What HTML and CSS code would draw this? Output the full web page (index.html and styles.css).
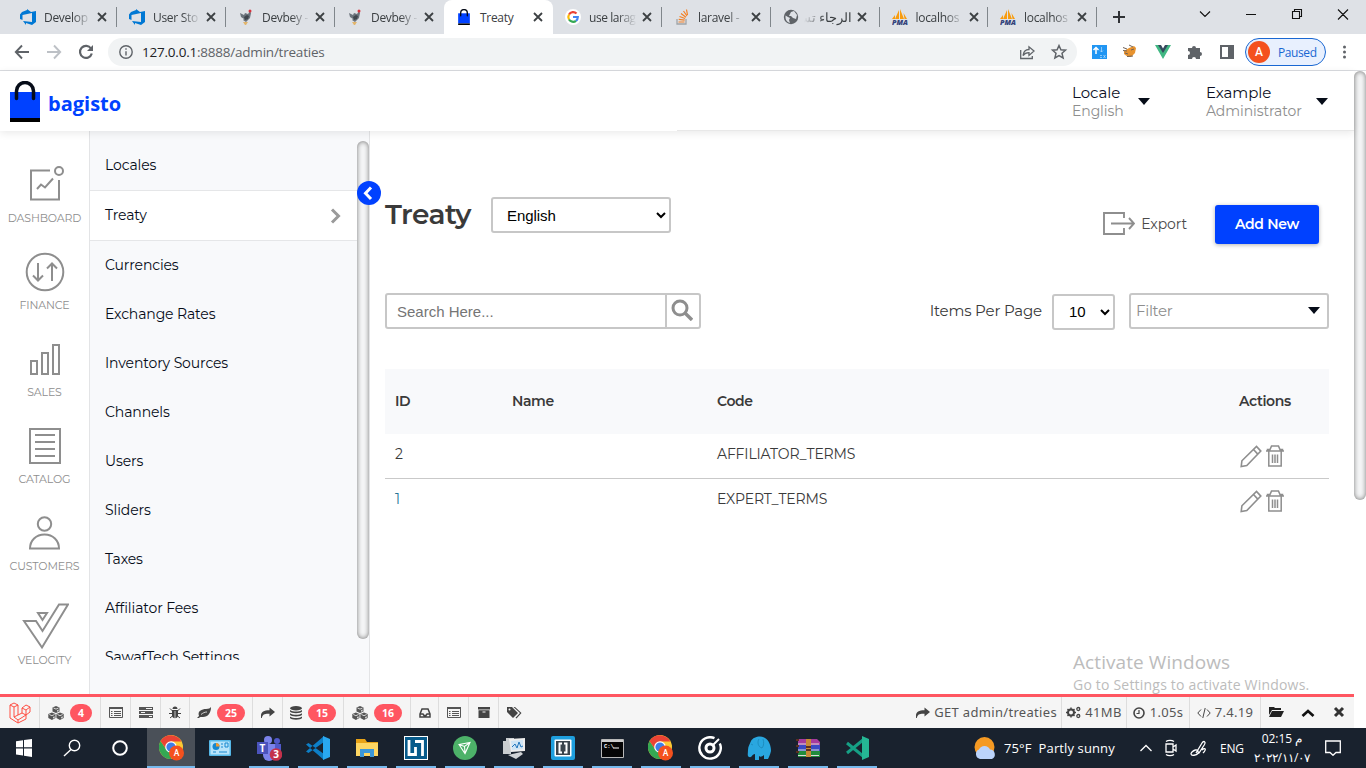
FILE: index.html
```html
<!DOCTYPE html>
<html lang="en">
<head>
<meta charset="utf-8">
<title>Treaty</title>
<link rel="stylesheet" href="styles.css">
</head>
<body>
<svg class="defs" aria-hidden="true">
  <symbol id="devops" viewBox="0 0 16 16"><path fill="#0078d4" d="M0 5.500 2 3 7 1V0l4 3 5-1v11l-4 3-6-2v2L3 12l9 1V4L2.500 6v5L0 10z"/></symbol>
  <symbol id="devbey" viewBox="0 0 16 16"><path fill="#6b737c" d="M2 4l4 2 1-2 3 1 2-3 1 2-1 5-4 4-3-2 1-1-3-2z"/><path fill="#3f464e" d="M6 8l3-2 2 1-1 3-3 1z"/><circle cx="12" cy="2" r="1.500" fill="#d8323c"/><path fill="#e2b56c" d="M5 13h5l-2 3H7z"/></symbol>
  <symbol id="bag" viewBox="0 0 30 41"><path fill="#0041ff" d="M0 11h30v26H0z"/><path d="M0 37h30v4H0z"/><path d="M6.500 17.500V10a8.500 8.500 0 0 1 17 0v7.500" fill="none" stroke="#060c18" stroke-width="3.500" stroke-linecap="round"/></symbol>
  <symbol id="pma" viewBox="0 0 16 16"><path fill="#f89c0e" d="M3 10 7 1v9zM8 10V0l4 10zM12.500 10l-1-6 3.500 6zM0 10l3-4v4z"/><text x="0" y="15.500" font-family="Open Sans" font-size="6.500" font-weight="800" font-style="italic" fill="#33417a" textLength="16" lengthAdjust="spacingAndGlyphs">PMA</text></symbol>
  <symbol id="x" viewBox="0 0 10 10"><path d="M1 1l8 8M9 1l-8 8" stroke="#3c4043" stroke-width="1.800"/></symbol>
  <symbol id="chrome" viewBox="0 0 26 26"><circle cx="12" cy="12" r="12" fill="#fcc934"/><path fill="#34a853" d="M1.600 6A12 12 0 0 0 12 24l5-9-10-1z"/><path fill="#ea4335" d="M1.600 6A12 12 0 0 1 22.400 6.500H12L7 14z"/><circle cx="12" cy="12" r="5.800" fill="#fff"/><circle cx="12" cy="12" r="4.600" fill="#3f7de8"/><circle cx="17.500" cy="18" r="7.500" fill="#f4511e"/><text x="17.500" y="21" text-anchor="middle" font-family="Roboto" font-size="8.500" font-weight="500" fill="#fff">A</text></symbol>
  <symbol id="cubes" viewBox="0 0 16 14"><path fill="#555" d="M8 0l3.500 1.500v4L8 7 4.500 5.500v-4zM3.900 6.500 7.500 8v4L3.900 14 .3 12V8zM12 6.500 15.700 8v4L12 14l-3.600-2V8z"/><path d="M5.500 2 8 3.100 10.500 2M1.300 8.500l2.600 1.200 2.600-1.200M9.500 8.500l2.500 1.200 2.600-1.200" fill="none" stroke="#f5f5f5" stroke-width=".8"/><path d="M9.200 4.200v1.600l1.300-.6V3.600zM5.200 11v1.600l1.300-.7v-1.600zM13.300 11v1.600l1.300-.7v-1.600z" fill="#f5f5f5"/></symbol>
  <symbol id="list" viewBox="0 0 14 12"><path fill="none" stroke="#555" d="M.5.5h13v10H.5z"/><path stroke="#555" d="M0 1h14" stroke-width="2"/><path stroke="#555" d="M2 4.500h1.500M5 4.500h7M2 6.500h1.500M5 6.500h7M2 8.500h1.500M5 8.500h7"/></symbol>
  <symbol id="share" viewBox="0 0 14 12"><path fill="#444" d="M0 11V8.500C0 5 3 3.300 8.500 3.300V.5L14 5 8.500 9.500V6.700C4 6.500 1.500 7 .8 11z"/></symbol>
  <symbol id="pencil" viewBox="0 0 22 23"><path d="M1.200 21.500l.7-5.700L16.500 1.500l4.300 4.600L6.800 20.500zM13.500 4.500l4.300 4.600" fill="none" stroke="#8e8e8e" stroke-width="1.600"/></symbol>
  <symbol id="trash" viewBox="0 0 18 22"><path d="M0 6h18M2.800 6v15h12.400V6M1.500 6V4.500H4l1.500-3.400h7L14 4.500h2.500V6M6.500 9.500V18M9 9.500V18M11.500 9.500V18" fill="none" stroke="#8e8e8e" stroke-width="1.500"/></symbol>
  <symbol id="down" viewBox="0 0 12 7"><path fill="#060c18" d="M0 0h12L6 7z"/></symbol>
</svg>

<div class="tabs">
  <div class="tab"><svg class="fav"><use href="#devops"/></svg><span class="name">Develop</span><svg class="close"><use href="#x"/></svg></div>
  <div class="tab"><svg class="fav"><use href="#devops"/></svg><span class="name">User Sto</span><svg class="close"><use href="#x"/></svg></div>
  <div class="tab"><svg class="fav"><use href="#devbey"/></svg><span class="name">Devbey -</span><svg class="close"><use href="#x"/></svg></div>
  <div class="tab plain"><svg class="fav"><use href="#devbey"/></svg><span class="name">Devbey -</span><svg class="close"><use href="#x"/></svg></div>
  <div class="tab active"><svg class="fav"><use href="#bag"/></svg><span class="name">Treaty</span><svg class="close"><use href="#x"/></svg></div>
  <div class="tab"><svg class="fav" viewBox="0 0 16 16"><circle cx="8" cy="8" r="8" fill="#fff"/><g fill="none" stroke-width="2.200"><path stroke="#ea4335" d="M4 5.500a4.800 4.800 0 0 1 7.500-1"/><path stroke="#fbbc05" d="M4 5.500a5 5 0 0 0 0 5"/><path stroke="#34a853" d="M4 10.500a4.800 4.800 0 0 0 7 1.300"/><path stroke="#4285f4" d="M11 11.800A5 5 0 0 0 12.800 8H8"/></g></svg><span class="name tight">use larag</span><svg class="close"><use href="#x"/></svg></div>
  <div class="tab"><svg class="fav" viewBox="0 0 16 16"><path d="M3 10v5h9v-5" fill="none" stroke="#a0a4a8" stroke-width="1.300"/><path d="M4.500 13h6M4.700 10.300l6 .9M5.500 7.500l5.600 2M7 4.500l5 3.700M9.500 2l3.500 5M12.500.5l1 5.500" stroke="#f48024" stroke-width="1.200"/></svg><span class="name">laravel -</span><svg class="close"><use href="#x"/></svg></div>
  <div class="tab"><svg class="fav" viewBox="0 0 16 16"><circle cx="8" cy="8" r="7.200" fill="#5f6368"/><path fill="#dee1e6" d="M2.500 6.500 5 8l2 1-1 2 1 3a6 6 0 0 1-4.500-5zM8 3l3-1 3 4-1 4-3-1-2-2H6l1-2z"/></svg><span class="name rtl" dir="rtl">الرجاء تسـ</span><svg class="close"><use href="#x"/></svg></div>
  <div class="tab"><svg class="fav"><use href="#pma"/></svg><span class="name">localhos</span><svg class="close"><use href="#x"/></svg></div>
  <div class="tab"><svg class="fav"><use href="#pma"/></svg><span class="name">localhos</span><svg class="close"><use href="#x"/></svg></div>
  <svg class="win" viewBox="1097 0 269 34" fill="none"><path d="M1113 17h12M1119 11v12" stroke="#303236" stroke-width="2"/><g stroke="#111" stroke-width="1.100"><path d="M1200 11.500l5 5 5-5M1246 14.500h10M1292.500 11.500h7v7h-7zM1294.500 11.500v-2h7v7h-2M1338 9.500l10 10M1348 9.500l-10 10"/></g></svg>
</div>

<div class="toolbar">
  <svg class="navbtns" viewBox="0 34 108 36" fill="none" stroke-width="1.900"><path stroke="#5f6368" d="M29 52H16M22 45.500 15.800 52l6.200 6.500"/><path stroke="#bdc1c6" d="M47 52h13M54 45.500l6.200 6.500-6.200 6.500"/><path stroke="#5f6368" stroke-width="2.200" d="M91 48.500a6 6 0 1 0 .8 5"/><path fill="#5f6368" d="M93 45v6h-6z"/></svg>
  <div class="url">
    <svg class="info" viewBox="0 0 14 14" fill="none" stroke="#5f6368" stroke-width="1.400"><circle cx="7" cy="7" r="6.200"/><path d="M7 6.200v4.300M7 3.300v1.500"/></svg>
    <span class="addr"><b>127.0.0.1</b>:8888/admin/treaties</span>
    <svg class="urlicons" viewBox="1018 38 52 28" fill="none" stroke="#5f6368" stroke-width="1.300"><path d="M1020.700 50v8.500h11.600V56M1023 55.500c.5-4 3-6 6-6v-2.700l5 4.300-5 4.300v-2.700c-3 0-4.500.7-6 2.800z"/><path stroke-width="1.500" d="M1059 45.500l1.900 4.300 4.600.4-3.500 3.100 1.100 4.600-4.100-2.400-4.100 2.400 1.100-4.600-3.500-3.100 4.600-.4z"/></svg>
  </div>
  <svg class="ext" viewBox="1077 38 168 28"><path fill="#2196f3" d="M1092 45h15v14h-15z"/><path d="M1096 54v-6M1093.500 50l2.500-2.500 2.500 2.500" fill="none" stroke="#fff" stroke-width="1.500"/><path d="M1101.500 47v5M1100 50.500l1.500 1.500 1.500-1.500M1100 55.500h2M1100 57.500h2M1103.500 55l2 3M1105.500 55l-2 3" fill="none" stroke="#b9defc" stroke-width=".7"/><path fill="#e8932f" d="M1124 51l5-3 5-2 2 2-1 5-4 4h-3l-4-3z"/><path d="M1123 47.500l4 1.500M1129 45l4 2M1125 53l3 1M1131 50l3-1M1127 56.500l6-.5M1123 50.500l4 .5" stroke="#6f6258"/><path fill="#41b883" d="M1155 45h5l3 5 3-5h5l-8 14z"/><path fill="#35495e" d="M1158 45h3l2 3.500 2-3.500h3l-5 8z"/><path fill="#5f6368" d="M1188 48h4a2 2 0 1 1 4 0h4v4a2 2 0 1 1 0 4v3h-4a2 2 0 1 0-4 0h-4v-4a2 2 0 1 0 0-4z"/><path fill="none" stroke="#5f6368" stroke-width="2" d="M1221 46h12v12h-12z"/><path fill="#5f6368" d="M1228 45h6v14h-6z"/></svg>
  <div class="profile"><span class="avatar">A</span><span>Paused</span></div>
  <svg class="dots" viewBox="0 0 38 16" fill="#5f6368"><circle cx="18.500" cy="3" r="1.500"/><circle cx="18.500" cy="8" r="1.500"/><circle cx="18.500" cy="13" r="1.500"/></svg>
</div>

<div class="app">
  <div class="page">
    <header class="header">
      <svg class="logo"><use href="#bag"/></svg><span class="brand">bagisto</span>
      <div class="drop locale"><div>Locale<small>English</small></div><svg class="tri"><use href="#down"/></svg></div>
      <div class="drop user"><div>Example<small>Administrator</small></div><svg class="tri"><use href="#down"/></svg></div>
    </header>
    <div class="body">
      <nav class="side">
        <div class="item"><svg viewBox="21 161 48 48"><path d="M50 170.500H31v29h28V180M37 189l4-4.500 4 3 8-9"/><circle cx="59" cy="171" r="4"/></svg><span>DASHBOARD</span></div>
        <div class="item"><svg viewBox="21 248 48 48"><circle cx="45" cy="272" r="18.300"/><path d="M38 263v17M33 275.500l5 5 5-5M52 281v-17M47 268.500l5-5 5 5"/></svg><span>FINANCE</span></div>
        <div class="item"><svg viewBox="21 335 48 48"><path d="M31 361h6v13h-6zM42 353h6v21h-6zM53 345h6v29h-6z"/></svg><span>SALES</span></div>
        <div class="item"><svg viewBox="21 422 48 48"><path d="M30 429h30v34H30zM35 435h20M35 442h20M35 449h20M35 456h20"/></svg><span>CATALOG</span></div>
        <div class="item"><svg viewBox="21 509 48 48"><circle cx="44.500" cy="524" r="6.700"/><path d="M30 548.500c0-8 6-14 14.500-14s14.500 6 14.500 14z"/></svg><span>CUSTOMERS</span></div>
        <div class="item velocity"><svg viewBox="21 600 48 52"><path d="M24 621h12l6.500 10 16.500-26.500h9L42 647.500zM38 613h9l-4.500 7z"/></svg><span>VELOCITY</span></div>
      </nav>
      <aside class="sub">
        <div class="list">
          <div>Locales</div>
          <div class="current">Treaty<svg viewBox="0 0 11 16"><path d="M2 1.500 8.500 8 2 14.500" fill="none" stroke="#9a9a9a" stroke-width="3"/></svg></div>
          <div>Currencies</div><div>Exchange Rates</div><div>Inventory Sources</div><div>Channels</div><div>Users</div><div>Sliders</div><div>Taxes</div><div>Affiliator Fees</div><div>SawafTech Settings</div>
        </div>
        <i class="scroll subscroll"></i>
        <span class="collapse"><svg viewBox="0 0 24 24"><path d="M14 6.500 8.500 12.200l5.500 5.800" fill="none" stroke="#fff" stroke-width="3"/></svg></span>
      </aside>
      <main class="main">
        <div class="heading">
          <h1>Treaty</h1>
          <select class="lang"><option>English</option></select>
          <div class="export"><svg viewBox="0 0 32 23"><path d="M21 6V1H1v21h20v-6M8 11.500h23M26 6l5 5.500-5 5.500" fill="none" stroke="#8e8e8e" stroke-width="1.900"/></svg><span>Export</span></div>
          <button class="add">Add New</button>
        </div>
        <div class="filters">
          <div class="search"><span>Search Here...</span><i><svg viewBox="0 0 22 22" fill="none" stroke="#8e8e8e"><circle cx="9" cy="9" r="7" stroke-width="3"/><path d="M14 14l7 7" stroke-width="3.400"/></svg></i></div>
          <span class="ipp">Items Per Page</span>
          <select class="count"><option>10</option></select>
          <div class="filter"><span>Filter</span><svg class="tri"><use href="#down"/></svg></div>
        </div>
        <div class="table">
          <div class="row head"><span>ID</span><span>Name</span><span>Code</span><span>Actions</span></div>
          <div class="row"><span>2</span><span></span><span>AFFILIATOR_TERMS</span><span class="acts"><svg class="pencil"><use href="#pencil"/></svg><svg class="trash"><use href="#trash"/></svg></span></div>
          <div class="row last"><span class="one">1</span><span></span><span>EXPERT_TERMS</span><span class="acts"><svg class="pencil"><use href="#pencil"/></svg><svg class="trash"><use href="#trash"/></svg></span></div>
        </div>
      </main>
    </div>
  </div>
  <i class="scroll pagescroll"></i>
  <div class="watermark"><p class="wm1">Activate Windows</p><p class="wm2">Go to Settings to activate Windows.</p></div>
</div>

<div class="debug">
  <div class="d w40"><svg width="22" height="22" viewBox="0 0 22 22" fill="none" stroke="#ff4e42" stroke-width="1"><path d="M1 3l4-2 4 2v10l4-2V6l4-3 4 2v5l-4 3v4l-8 4-8-5zM1 3l4 2v10l4 3 8-5M5 5l4-2M5 15l4-2M13 6l4 2 4-3M17 8v5M13 11l4 2M9 18v3"/></svg></div>
  <div class="d w61"><svg width="16" height="14"><use href="#cubes"/></svg><b>4</b></div>
  <div class="d w30"><svg width="14" height="12"><use href="#list"/></svg></div>
  <div class="d w30"><svg width="14" height="12" viewBox="0 0 14 12"><path fill="#555" d="M0 0h14v3H0zM0 4h14v3H0zM0 8h14v3H0z"/><path d="M7 1.500h6M2 5.500h4M10 9.500h3" stroke="#f5f5f5"/></svg></div>
  <div class="d w29"><svg width="12" height="13" viewBox="0 0 12 13"><path fill="#444" d="M3.500 3a2.500 2.500 0 0 1 5 0zM3 4h6v6c-1 3-5 3-6 0z"/><path d="M0 7.500h12M1 2.500l3 3M11 2.500l-3 3M1 12l3-2.500M11 12 8 9.500" stroke="#444"/><path d="M6 5v7" stroke="#f5f5f5" stroke-width=".7"/></svg></div>
  <div class="d w63"><svg width="14" height="12" viewBox="0 0 14 12"><path fill="#444" d="M14 0c0 6-3 10-8 10-2 0-3-.5-4 1L0 11l2-2C0 4 5 2 9 2c3 0 4-1 5-2z"/><path d="M4 7.500c2-1.500 3.500-2.500 6-2.500" stroke="#f5f5f5" fill="none" stroke-width=".8"/></svg><b>25</b></div>
  <div class="d w30"><svg width="14" height="12"><use href="#share"/></svg></div>
  <div class="d w61"><svg width="12" height="14" viewBox="0 0 12 14"><ellipse cx="6" cy="2.200" rx="6" ry="2.200" fill="#444"/><path fill="#444" d="M0 4c3 2 9 2 12 0v1.500c-1 2.300-11 2.300-12 0zM0 7.200c3 2 9 2 12 0v1.500c-1 2.300-11 2.300-12 0zM0 10.400c3 2 9 2 12 0V12c-1 2.300-11 2.300-12 0z"/></svg><b>15</b></div>
  <div class="d w67"><svg width="16" height="14"><use href="#cubes"/></svg><b>16</b></div>
  <div class="d w28"><svg width="12" height="10" viewBox="0 0 12 10"><path d="M1 6l2-5h6l2 5v3H1zM1 6h3l1 1.500h2L8 6h3" fill="none" stroke="#444" stroke-width="1.500"/></svg></div>
  <div class="d w30"><svg width="14" height="12"><use href="#list"/></svg></div>
  <div class="d w30"><svg width="12" height="11" viewBox="0 0 12 11"><path fill="#444" d="M0 0h12v2.500H0zM.5 3.300h11V11H.5z"/><path d="M4.500 5h3" stroke="#f5f5f5"/></svg></div>
  <div class="d w30 nb"><svg width="15" height="12" viewBox="0 0 15 12"><path fill="#444" d="M0 0h5l6 6-5 5-6-6zM6.500 0H8l6.500 6-5 5.500-1-.8L13 6z"/><circle cx="2.500" cy="2.500" r="1" fill="#f5f5f5"/></svg></div>
  <div class="d req"><svg width="14" height="12"><use href="#share"/></svg><span>GET admin/treaties</span></div>
  <div class="d w65"><svg width="15" height="13" viewBox="0 0 15 13" fill="none" stroke="#444"><circle cx="5" cy="6.500" r="3" stroke-width="2"/><path stroke-width="1.400" d="M5 1.500v2M5 9.500v2M0 6.500h2M8 6.500h2M1.500 3l1.500 1.500M7 8.500 8.500 10M8.500 3 7 4.500M3 8.500 1.500 10"/><circle cx="12.300" cy="3" r="1.500" stroke-width="1.300"/><circle cx="12.300" cy="10" r="1.500" stroke-width="1.300"/></svg><span>41MB</span></div>
  <div class="d w63 g5"><svg width="12" height="12" viewBox="0 0 12 12" fill="none" stroke="#444" stroke-width="1.600"><circle cx="6" cy="6" r="5"/><path d="M6 3v3.500H3.500" stroke-width="1.200"/></svg><span>1.05s</span></div>
  <div class="d w71"><svg width="14" height="10" viewBox="0 0 14 10" fill="none" stroke="#444"><path d="M4 1.500.8 5 4 8.500M10 1.500 13.200 5 10 8.500M8.200 0 5.800 10"/></svg><span>7.4.19</span></div>
  <svg class="dend" viewBox="1261 697 93 31"><path fill="#222" d="M1269 707h5l1 1h6v2h-9l-3 5zM1272 711h12l-3 6h-12z"/><path fill="none" stroke="#111" stroke-width="2.700" d="M1302.500 716l5.500-5 5.500 5"/><path fill="none" stroke="#333" stroke-width="3" d="M1335 708l8 8M1343 708l-8 8"/></svg>
</div>

<div class="taskbar">
  <svg class="t48" viewBox="0 0 48 40"><path fill="#fff" d="M16 13.300l7-1v7h-7zM24 12.100l8-1.100v8.300h-8zM16 20.500h7v7l-7-1zM24 20.500h8V29l-8-1.200z"/></svg>
  <svg class="t48" viewBox="0 0 48 40"><g fill="none" stroke="#fff" stroke-width="1.400"><circle cx="26.500" cy="17.500" r="5.200"/><path d="M23 21.500l-7 6.500"/></g></svg>
  <svg class="t48 last48" viewBox="0 0 48 40"><circle cx="24" cy="20" r="6.800" fill="none" stroke="#fff" stroke-width="2"/></svg>
  <div class="task on"><svg width="26" height="26"><use href="#chrome"/></svg></div>
  <div class="task off"><svg width="22" height="16" viewBox="0 0 22 16"><rect width="22" height="16" rx="1" fill="#55b8e8"/><path fill="#b9e4fa" d="M1.500 1.500h19v13h-19z"/><circle cx="7" cy="6.500" r="3.500" fill="#1688d0"/><path fill="#f29a2e" d="M7 6.500V3a3.500 3.500 0 0 1 3.500 3.500z"/><path d="M12 4h2M12 7h2M16 3h3v4h-3zM4 12h3M10 12h8" stroke="#1688d0" fill="none"/></svg></div>
  <div class="task"><svg width="26" height="26" viewBox="0 0 26 26"><circle cx="12" cy="5" r="4" fill="#7b83eb"/><circle cx="21" cy="6" r="3" fill="#5059c9"/><path fill="#5059c9" d="M17 9h8v8h-8z"/><path fill="#7b83eb" d="M7 9h12v11a6 6 0 0 1-12 0z"/><path fill="#4b53bc" d="M1 7h11v12H1z"/><text x="6.500" y="17" text-anchor="middle" font-family="Open Sans" font-size="10" font-weight="700" fill="#fff">T</text><circle cx="20" cy="19.500" r="6.300" fill="#c4314b"/><text x="20" y="23" text-anchor="middle" font-family="Open Sans" font-size="10" font-weight="700" fill="#fff">3</text></svg></div>
  <div class="task"><svg width="24" height="24" viewBox="0 0 24 24"><path fill="#0d7fc7" d="M0 8.500 2.500 7 18 18v6zM0 15.500 2.500 17 18 6V0z"/><path fill="#29a8f0" d="M17 0l7 3v18l-7 3z"/></svg></div>
  <div class="task"><svg width="22" height="19" viewBox="0 0 22 19"><path fill="#e8a317" d="M0 0h9l2 3h11v14H0z"/><path fill="#fdd663" d="M0 4h22v13H0z"/><path fill="#3b97d8" d="M4 10h14v8h-4v-4H8v4H4z"/></svg></div>
  <div class="task"><svg width="24" height="24" viewBox="0 0 24 24"><path fill="#fff" d="M0 0h24v24H0z"/><path fill="#075b8b" d="M1 1h22v22H1z"/><path d="M5 4v14.500h6.500V11M11 5.500h7.500V20" fill="none" stroke="#fff" stroke-width="2.800"/></svg></div>
  <div class="task"><svg width="24" height="24" viewBox="0 0 24 24"><circle cx="12" cy="12" r="12" fill="#4db269"/><path d="M6 8.500 17 6.500l-5 11zM6 8.500l5.500 2 5.500-4M11.500 10.500l.5 6" fill="none" stroke="#fff" stroke-width="1.100"/></svg></div>
  <div class="task"><svg width="24" height="22" viewBox="0 0 24 22"><path fill="#c9cdd0" d="M1 4h8v13H1zM4 1h8v13H4z"/><path fill="#eee" d="M7 2l16-1v13l-14 1z"/><path fill="#d0d3d6" d="M6 18l13-3 2 2-7 5z"/><path fill="#cfe5f5" d="M9 4l12-1v9l-11 1z"/><path d="M10 10l3-3 2 4 2-6 2 5 2-1" fill="none" stroke="#2377bd"/></svg></div>
  <div class="task"><svg width="24" height="24" viewBox="0 0 24 24"><rect width="24" height="24" rx="2" fill="#1e9fde"/><rect x="3.500" y="3.500" width="17" height="17" rx="1" fill="#fff"/><path fill="#3a444c" d="M5 5h14v14H5z"/><path d="M11 7.500H8.500v9H11M13 7.500h2.500v9H13" fill="none" stroke="#fff" stroke-width="2"/></svg></div>
  <div class="task"><svg width="23" height="19" viewBox="0 0 23 19"><path fill="#050505" stroke="#b8b8b8" d="M.5.5h22v18H.5z"/><path fill="#ccc" d="M1 1h21v2H1z"/><text x="3" y="9" font-family="Liberation Mono" font-size="5.500" font-weight="700" fill="#fff">C:\</text><path d="M12 9h6" stroke="#fff"/></svg></div>
  <div class="task"><svg width="26" height="26"><use href="#chrome"/></svg></div>
  <div class="task"><svg width="24" height="24" viewBox="0 0 24 24" fill="none" stroke="#fff"><path stroke-width="2.400" d="M16.500 2.200A10.700 10.700 0 1 0 21.800 7.500"/><circle cx="12" cy="12" r="4" stroke-width="3"/><path d="M15 9l6-6" stroke-width="2"/></svg></div>
  <div class="task"><svg width="24" height="24" viewBox="0 0 24 24"><path fill="#29a7e0" d="M1 14c0-4 2-6 3-9C6 1 14-1 18 2c4 2 6 8 6 13-1 4-2 6-3 8h-4v-4c-2 2-4 2-5 1v4H8v-6c-3 0-3 4-6 3-2-1-1-4-1-7z"/><path d="M12 3c-2 3-1 8 3 9 2-2 2-6 1-9M4 8l2 1" fill="none" stroke="#1b86b8" stroke-width=".8"/></svg></div>
  <div class="task"><svg width="24" height="18" viewBox="0 0 24 18"><path fill="#a53a9e" d="M2 0h19l3 3v3H2z"/><path fill="#3949c4" d="M2 6h22v6H2z"/><path fill="#218c3c" d="M2 12h22v6H2z"/><path d="M2 5h21M2 11h21M2 16.500h21" stroke="#ddd"/><path fill="#c78a35" d="M10 0h5v18h-5z"/><path d="M0 1h3M0 7h3M0 13h3M10 8h5M10 11h5" stroke="#5c3020" stroke-width="2"/></svg></div>
  <div class="task"><svg width="24" height="24" viewBox="0 0 24 24"><path fill="none" stroke="#16a085" stroke-width="3" d="M18 4 2 17M18 20 2 7"/><path fill="#25b895" d="M17 0l7 3v18l-7 3z"/></svg></div>
  <svg class="weather" viewBox="0 0 23 23"><circle cx="10.500" cy="10" r="10" fill="#f59a23"/><path fill="#bcd4fb" d="M6 22a5 5 0 0 1-1-9.500 6 6 0 0 1 11 0A5 5 0 0 1 18 22z"/></svg>
  <span class="temp">75°F&nbsp; Partly sunny</span>
  <svg class="tray" viewBox="1136 728 80 40" fill="none" stroke="#fff" stroke-width="1.300"><path d="M1140.500 751l5.500-5.500 5.500 5.500M1166 744h7v8h-7zM1173 747l3-2v6l-3-2M1166 741.500c2-1.500 6-1.500 8 0M1166 754.500c2 1.500 6 1.500 8 0M1196 753l6-10c2-3 4-1 2.500 1.500L1199 753l-4 2c-4 1-5-1-3-3s5-3 6-1-1 4-3 4M1202 750c3-3 5-1 1 3"/></svg>
  <span class="eng">ENG</span>
  <div class="clock"><span dir="rtl">م 02:15</span><span class="date" dir="ltr">٢٠٢٢/١١/٠٧</span></div>
  <svg class="notice" viewBox="0 0 16 16"><path d="M.7 1h14.600v11.500H11L8 15.300l-3-2.800H.7z" fill="none" stroke="#fff" stroke-width="1.300"/></svg>
</div>
</body>
</html>
```
FILE: styles.css
```css
* { box-sizing: border-box; }
body { margin: 0; width: 1366px; height: 768px; overflow: hidden; display: flex; flex-direction: column; background: #fff; font-family: Montserrat, Inter, sans-serif; }
svg { display: block; flex: none; }
.defs { position: absolute; width: 0; height: 0; }

.tabs { height: 34px; flex: none; background: #dee1e6; display: flex; padding-left: 8px; font: 12px "Open Sans", "Noto Sans", sans-serif; color: #3c4043; }
.tab { width: 109px; height: 34px; flex: none; display: flex; align-items: center; padding-left: 12px; background: linear-gradient(#80868b, #80868b) right 0 top 7px / 1px 20px no-repeat; }
.tab:nth-child(n+8) { width: 108.500px; }
.tab.plain { background: none; }
.tab.active { background: #fff; border-radius: 8px 8px 0 0; }
.fav { width: 16px; height: 16px; margin-right: 8px; }
.name { width: 53px; white-space: nowrap; letter-spacing: -.3px; -webkit-mask-image: linear-gradient(90deg, #000 55%, transparent 90%); }
.name.tight { letter-spacing: -.45px; }
.active .name { -webkit-mask-image: none; }
.name.rtl { width: 48px; margin-right: 5px; margin-left: -3px; padding-right: 0; letter-spacing: 0; font-size: 12.500px; -webkit-mask-image: linear-gradient(270deg, #000 55%, transparent); }
.close { width: 10px; height: 10px; }
.win { width: 269px; height: 34px; }

.toolbar { height: 37px; flex: none; display: flex; align-items: center; border-bottom: 1px solid #dadce0; font-family: "Open Sans", sans-serif; }
.navbtns { width: 108px; height: 36px; }
.url { width: 969px; height: 28px; border-radius: 14px; background: #f1f3f4; display: flex; align-items: center; padding: 0 7px 0 11px; }
.info { width: 14px; height: 14px; margin-right: 9px; }
.addr { font-size: 13.500px; color: #5f6368; letter-spacing: -.22px; }
.addr b { font-weight: 400; color: #202124; }
.urlicons { width: 52px; height: 28px; margin-left: auto; }
.ext { width: 168px; height: 28px; }
.profile { width: 81px; height: 28px; border: 1px solid #1967d2; border-radius: 14px; background: #e8f0fe; display: flex; align-items: center; gap: 8px; padding-left: 2px; font-size: 12px; letter-spacing: -.4px; color: #1967d2; }
.avatar { width: 22px; height: 22px; border-radius: 50%; background: #f4511e; color: #fff; font: 500 12px/22px Roboto, sans-serif; letter-spacing: 0; text-align: center; }
.dots { width: 38px; height: 16px; }

.app { position: relative; height: 623px; flex: none; display: flex; }
.page { width: 1354px; display: flex; flex-direction: column; }
.scroll { width: 12px; border-radius: 6px; background: #f4f5f6; box-shadow: inset 0 0 5px #777; }
.pagescroll { height: 429px; }
.header { position: relative; z-index: 1; height: 60px; flex: none; display: flex; align-items: center; padding-left: 10px; background: linear-gradient(#e8e8e8, #e8e8e8) right bottom / 677px 1px no-repeat #fff; box-shadow: 0 2px 8px rgba(0,0,0,.09); }
.logo { width: 30px; height: 41px; }
.brand { margin: 5px 0 0 8px; font: 700 20px "Open Sans", sans-serif; letter-spacing: 0; color: #0041ff; }
.drop { display: flex; align-items: center; font-size: 15px; line-height: 18px; letter-spacing: -.05px; color: #0b0f24; }
.drop > div { margin-top: 2px; }
.drop small { display: block; font-size: 14px; line-height: 18px; color: #8e8e8e; letter-spacing: -.1px; }
.locale { margin-left: auto; width: 134px; }
.user { width: 148px; }
.tri { width: 12px; height: 7px; }
.locale .tri { margin-left: auto; margin-right: 56px; }
.user .tri { margin-left: auto; margin-right: 26px; }

.body { height: 563px; display: flex; }
.side { width: 89px; padding-top: 30px; flex: none; }
.item { height: 87px; display: flex; flex-direction: column; align-items: center; font-size: 11px; line-height: 19px; letter-spacing: -.15px; color: #8e8e8e; }
.item svg { width: 48px; height: 48px; fill: none; stroke: #8e8e8e; stroke-width: 2; }
.velocity { padding-top: 4px; }
.velocity svg { height: 52px; }
.velocity span { margin-top: -1px; }
.sub { position: relative; width: 281px; flex: none; background: #f8f9fb; border: solid #e3e4e6; border-width: 0 1px; padding-top: 10px; }
.list { height: 519px; width: 267px; overflow: hidden; font-size: 14px; color: #060c18; letter-spacing: -.12px; }
.list > div { height: 49px; line-height: 49px; padding-left: 15px; white-space: nowrap; }
.list .current { height: 51px; display: flex; align-items: center; background: #fff; border: solid #e5e6e8; border-width: 1px 0; padding-right: 16px; }
.current svg { width: 11px; height: 16px; margin-left: auto; }
.subscroll { position: absolute; right: 0; top: 10px; height: 498px; }
.collapse { position: absolute; right: -12px; top: 50px; width: 24px; height: 24px; border-radius: 50%; background: #0041ff; }

.main { flex: 1; padding: 66px 25px 0 15px; color: #3a3a3a; }
.heading { height: 96px; display: flex; align-items: flex-start; }
h1 { margin: -1px 0 0; width: 106px; font-size: 28px; line-height: 36px; font-weight: 600; letter-spacing: -.5px; }
select { height: 36px; background: #fff; border: 2px solid #c7c7c7; border-radius: 3px; font: 15px "Liberation Sans", sans-serif; color: #000; }
.lang { width: 180px; padding-left: 10px; letter-spacing: -.05px; }
.export { margin: 15px 28px 0 auto; display: flex; align-items: center; gap: 6px; font-size: 14px; line-height: 23px; letter-spacing: -.12px; color: #4a4a4a; }
.export span { padding-top: 2px; line-height: 21px; }
.export svg { width: 32px; height: 23px; }
.add { width: 104px; height: 39px; margin: 8px 10px 0 0; padding-bottom: 2px; border: 0; border-radius: 3px; background: #0041ff; color: #fff; font: 600 14px Montserrat, Inter, sans-serif; letter-spacing: -.3px; box-shadow: 0 1px 4px rgba(0,0,0,.3); }
.filters { height: 76px; display: flex; align-items: flex-start; }
.search { width: 316px; height: 36px; display: flex; align-items: center; border: 2px solid #c7c7c7; border-radius: 3px; font: 15px "Liberation Sans", sans-serif; color: #757575; }
.search span { flex: 1; padding-left: 10px; }
.search i { width: 34px; height: 32px; border-left: 2px solid #c7c7c7; padding: 4px; }
.search svg { width: 22px; height: 22px; }
.ipp { margin-left: auto; font-size: 15px; line-height: 36px; letter-spacing: -.18px; }
.count { width: 63px; margin: 1px 14px 0 10px; padding-left: 11px; padding-bottom: 2px; }
.filter { width: 200px; height: 36px; border: 2px solid #c7c7c7; border-radius: 3px; display: flex; align-items: center; justify-content: space-between; padding: 0 7px 1px 5px; font-size: 15px; letter-spacing: -.3px; color: #8e8e8e; }
.row { height: 45px; padding: 0 10px; display: grid; grid-template-columns: 117px 205px 522px 1fr; border-bottom: 1px solid #c9c9c9; font-size: 14px; line-height: 40px; letter-spacing: -.14px; }
.head { height: 65px; line-height: 65px; background: #f8f9fb; border: 0; font-weight: 600; letter-spacing: -.38px; }
.last { border: 0; }
.one { color: #277396; }
.acts { display: flex; padding: 11px 0 0 1px; gap: 4px; }
.pencil { width: 22px; height: 23px; }
.trash { width: 18px; height: 22px; }
.watermark { position: absolute; left: 1073px; top: 579px; font-family: "Open Sans", sans-serif; color: #bcbcbc; white-space: nowrap; }
.watermark p { margin: 0; }
.wm1 { font-size: 19px; line-height: 25px; letter-spacing: .08px; }
.wm2 { font-size: 14px; line-height: 20px; letter-spacing: .2px; }

.debug { width: 1354px; height: 34px; flex: none; display: flex; background: #f5f5f5; border-top: 3px solid #ff5661; color: #555; font: 13px "DejaVu Sans", sans-serif; white-space: nowrap; }
.d { display: flex; align-items: center; justify-content: center; gap: 6px; border-right: 1px solid #ddd; flex: none; }
.d b { height: 18px; padding: 0 8px; border-radius: 9px; background: #ff5661; color: #fff; font: 700 10.500px/18px "Open Sans", sans-serif; }
.d.nb { border: 0; }
.req { margin-left: auto; padding-right: 4px; }
.d.req { gap: 4px; }
.d span { margin-top: -2px; font: 13px "Noto Sans", sans-serif; letter-spacing: .32px; }
.w28 { width: 28px; } .w29 { width: 29px; } .w30 { width: 30px; } .w40 { width: 40px; } .w61 { width: 61px; } .w63 { width: 63px; } .w65 { width: 65px; gap: 4px; } .w67 { width: 67px; } .w71 { width: 71px; gap: 4px; }
.g5 { gap: 5px; }
.dend { width: 93px; height: 31px; }

.taskbar { height: 40px; flex: none; display: flex; align-items: center; background: #19222e; color: #fff; font: 13px "Open Sans", sans-serif; white-space: nowrap; }
.t48 { width: 48px; height: 40px; }
.last48 { margin-right: 3px; }
.task { width: 49px; height: 40px; flex: none; display: flex; align-items: center; justify-content: center; padding-right: 1px; background: linear-gradient(#76b9ed, #76b9ed) left 4px bottom / 40px 2px no-repeat; }
.task.on { padding: 0 0 0 1px; background: linear-gradient(#76b9ed, #76b9ed) left bottom / 48px 2px no-repeat, linear-gradient(#4a5058, #4a5058) left top / 48px 40px no-repeat; }
.task.off { background: none; }
.weather { width: 23px; height: 23px; margin: 0 7px 0 92px; }
.temp { width: 132px; letter-spacing: .12px; }
.tray { width: 80px; height: 40px; }
.eng { width: 33px; margin-left: 4px; font-size: 12px; letter-spacing: -.2px; }
.clock { width: 58px; text-align: center; font-size: 12px; line-height: 19px; letter-spacing: -.3px; }
.clock span { display: block; }
.date { direction: ltr; unicode-bidi: bidi-override; }
.notice { width: 16px; height: 16px; margin-left: 14px; }
```
